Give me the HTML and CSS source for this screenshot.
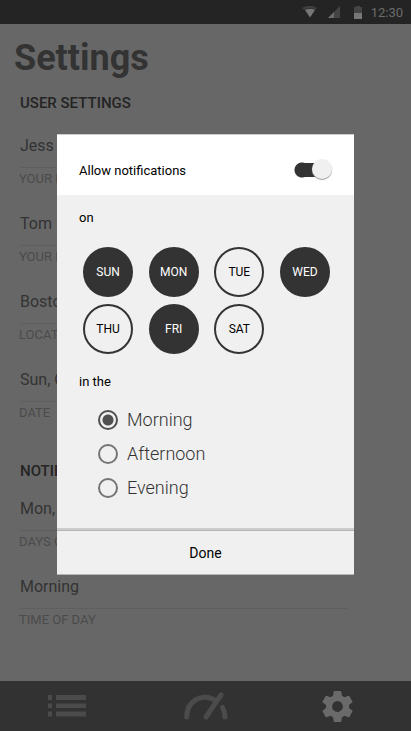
FILE: index.html
```html
<!DOCTYPE html>
<html lang="en">
<head>
<meta charset="utf-8">
<meta name="viewport" content="width=device-width, initial-scale=1">
<title>Settings</title>
<link rel="stylesheet" href="styles.css">
</head>
<body>
<div class="status">
  <svg class="status-wifi" width="16" height="12" viewBox="0 0 16 12" aria-hidden="true"><path fill="#3f3f3f" d="M0 2Q8-2.500 15 2L13.500 4Q8 0 2 4z"/><path fill="#777" d="M3 4Q8 1.500 13 4L8 11.500z"/></svg>
  <svg class="status-signal" width="12" height="12" viewBox="0 0 12 12" aria-hidden="true"><path fill="#444" d="M12 0v12H0z"/><path fill="#6c6c6c" d="M6 6v6H0z"/></svg>
  <svg class="status-battery" width="8" height="13" viewBox="0 0 8 13" aria-hidden="true"><path fill="#444" d="M2 0h4v1h2v6H0V1h2z"/><path fill="#777" d="M0 7h8v6H0z"/></svg>
  <span>12:30</span>
</div>
<main class="page">
  <h1>Settings</h1>
  <section>
    <h2>User settings</h2>
    <dl class="fields">
      <div class="field"><dd>Jess</dd><dt>Your name</dt></div>
      <div class="field"><dd>Tom</dd><dt>Your name</dt></div>
      <div class="field"><dd>Boston</dd><dt>Location</dt></div>
      <div class="field"><dd>Sun, Oct</dd><dt>Date</dt></div>
    </dl>
  </section>
  <section class="notifications">
    <h2>Notifications</h2>
    <dl class="fields">
      <div class="field"><dd>Mon, Wed</dd><dt>Days of week</dt></div>
      <div class="field"><dd>Morning</dd><dt>Time of day</dt></div>
    </dl>
  </section>
</main>
<nav class="tabs">
  <a href="#list" aria-label="List"><svg width="38" height="22" viewBox="0 0 38 22"><path fill="#4b4b4b" d="M0 0h4v5H0zM8 0h30v5H8zM0 8.500h4v4.500H0zM8 8.500h30v4.500H8zM0 16.500h4v5H0zM8 16.500h30v5H8z"/></svg></a>
  <a href="#dashboard" aria-label="Dashboard"><svg width="44" height="28" viewBox="0 0 44 28"><g fill="none" stroke="#4b4b4b" stroke-width="5" stroke-linecap="round"><path d="M2.700 25C2.700 9 17 1.500 30 7.500M22 25L37 2.800M38.500 15.500Q41 19.500 41 25"/></g></svg></a>
  <a href="#settings" aria-label="Settings" aria-current="page"><svg width="37" height="37" viewBox="0 0 24 24"><path fill="#6a6a6a" d="M19.430 12.980c.04-.32.07-.64.07-.98s-.03-.66-.07-.98l2.110-1.650c.19-.15.24-.42.12-.64l-2-3.460c-.12-.22-.39-.3-.61-.22l-2.490 1c-.52-.4-1.080-.73-1.690-.98l-.38-2.650C14.460 2.180 14.250 2 14 2h-4c-.25 0-.46.18-.49.42l-.38 2.650c-.61.25-1.170.59-1.690.98l-2.490-1c-.23-.09-.49 0-.61.22l-2 3.460c-.13.22-.07.49.12.64l2.110 1.650c-.04.32-.07.65-.07.98s.03.66.07.98l-2.110 1.650c-.19.15-.24.42-.12.64l2 3.460c.12.22.39.3.61.22l2.490-1c.52.4 1.080.73 1.690.98l.38 2.650c.03.24.24.42.49.42h4c.25 0 .46-.18.49-.42l.38-2.650c.61-.25 1.170-.59 1.690-.98l2.490 1c.23.09.49 0 .61-.22l2-3.460c.12-.22.07-.49-.12-.64zM12 15.500A3.500 3.500 0 1 1 12 8.500a3.500 3.500 0 0 1 0 7z"/></svg></a>
</nav>
<div class="overlay">
  <form class="dialog" role="dialog" aria-label="Allow notifications">
    <div class="dialog-head">
      <label for="allow">Allow notifications</label>
      <input class="switch" id="allow" type="checkbox" role="switch" checked>
    </div>
    <div class="dialog-body">
      <p>on</p>
      <div class="days">
        <button type="button" aria-pressed="true">SUN</button>
        <button type="button" aria-pressed="true">MON</button>
        <button type="button" aria-pressed="false">TUE</button>
        <button type="button" aria-pressed="true">WED</button>
        <button type="button" aria-pressed="false">THU</button>
        <button type="button" aria-pressed="true">FRI</button>
        <button type="button" aria-pressed="false">SAT</button>
      </div>
      <p>in the</p>
      <div class="times">
        <label><input type="radio" name="time" checked><span>Morning</span></label>
        <label><input type="radio" name="time"><span>Afternoon</span></label>
        <label><input type="radio" name="time"><span>Evening</span></label>
      </div>
    </div>
    <button class="done" type="button">Done</button>
  </form>
</div>
</body>
</html>
```

FILE: styles.css
```css
* {
  box-sizing: border-box;
}

body {
  display: flex;
  flex-direction: column;
  min-height: 100vh;
  margin: 0;
  background: #676767;
  color: #333;
  font-family: Roboto, sans-serif;
}

h1, h2, p, dl, dd {
  margin: 0;
}

.status {
  display: flex;
  align-items: center;
  justify-content: flex-end;
  height: 24px;
  padding-right: 8px;
  background: #242424;
  color: #6c6c6c;
  font-size: 13px;
}

.status-wifi {
  margin-right: 10px;
}

.status-signal {
  margin-right: 14px;
}

.status-battery {
  margin-right: 9px;
}

.page {
  flex: 1;
  padding: 12px 63px 0 20px;
}

h1 {
  margin-left: -6px;
  font-size: 36px;
  line-height: 44px;
}

h2 {
  margin-top: 13px;
  color: #242424;
  font-size: 15px;
  font-weight: 500;
  line-height: 20px;
  text-transform: uppercase;
}

.fields {
  padding-top: 22px;
}

.field {
  display: flex;
  flex-direction: column;
  height: 78px;
}

.field dd {
  height: 33px;
  border-bottom: 1px solid #5f5f5f;
  font-size: 16px;
  line-height: 22px;
}

.field dt {
  margin-left: -1px;
  color: #4b4b4b;
  font-size: 13px;
  line-height: 22px;
  text-transform: uppercase;
}

.notifications h2 {
  margin-top: 14px;
}

.notifications .fields {
  padding-top: 17px;
}

.tabs {
  display: grid;
  grid-template-columns: 134fr 144fr 119fr;
  height: 50px;
  padding-right: 14px;
  background: #323232;
}

.tabs a {
  display: flex;
  align-items: center;
  justify-content: center;
}

.overlay {
  position: absolute;
  inset: 0;
  padding: 134px 57px 0;
}

.dialog {
  background: #f0f0f0;
  color: #000;
  font-size: 13px;
}

.dialog-head {
  display: flex;
  align-items: center;
  justify-content: space-between;
  height: 61px;
  padding: 10px 22px 0;
  border-top: 1px solid #ccc;
  background: #fff;
}

.switch {
  appearance: none;
  width: 38px;
  height: 22px;
  margin: 0;
  background: radial-gradient(circle at 8px 11px, #333 7px, transparent 8px) 0 0 / 18px 22px no-repeat,
    linear-gradient(#333, #333) 8px 4px / 16px 14px no-repeat;
}

.switch::before {
  content: "";
  display: block;
  width: 20px;
  height: 20px;
  margin-left: 18px;
  border-radius: 50%;
  background: #f0f0f0;
  box-shadow: 0 1px 1px #999;
}

.dialog-body {
  padding: 13px 22px 30px;
}

.dialog p {
  line-height: 20px;
}

.days {
  display: grid;
  grid-template-columns: repeat(4, 50px);
  justify-content: space-between;
  row-gap: 7px;
  padding: 19px 2px 18px 4px;
}

.days button {
  width: 50px;
  height: 50px;
  padding: 0;
  border: 2px solid #333;
  border-radius: 50%;
  background: transparent;
  color: #000;
  font: 12px/20px Roboto, sans-serif;
}

.days button[aria-pressed="true"] {
  background: #333;
  color: #fff;
}

.times {
  display: flex;
  flex-direction: column;
  gap: 10px;
  padding: 16px 19px 0;
}

.times label {
  display: flex;
  align-items: center;
  gap: 9px;
  color: #333;
  font-size: 18px;
  font-weight: 300;
  line-height: 24px;
}

.times input {
  appearance: none;
  width: 20px;
  height: 20px;
  margin: 0;
  border: 2px solid #757575;
  border-radius: 50%;
}

.times input:checked {
  border-color: #505050;
  background: radial-gradient(circle, #505050 5px, transparent 6px);
}

.done {
  display: block;
  width: 100%;
  height: 45px;
  padding: 0;
  border: solid #b5b5b5;
  border-width: 1px 0;
  background: #f0f0f0;
  box-shadow: 0 -2px 0 #ccc;
  color: #000;
  font: 14px/20px Roboto, sans-serif;
}
```
